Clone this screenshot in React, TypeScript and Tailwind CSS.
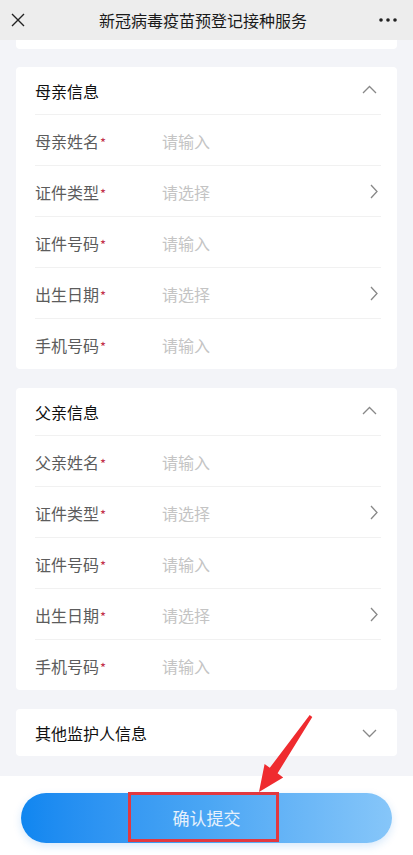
const font = { fontFamily: '"Noto Sans CJK SC", "Noto Sans", sans-serif' };

type Row = { label: string; hint: string; select?: boolean };

const motherRows: Row[] = [
  { label: "母亲姓名", hint: "请输入" },
  { label: "证件类型", hint: "请选择", select: true },
  { label: "证件号码", hint: "请输入" },
  { label: "出生日期", hint: "请选择", select: true },
  { label: "手机号码", hint: "请输入" },
];

const fatherRows: Row[] = [
  { label: "父亲姓名", hint: "请输入" },
  { label: "证件类型", hint: "请选择", select: true },
  { label: "证件号码", hint: "请输入" },
  { label: "出生日期", hint: "请选择", select: true },
  { label: "手机号码", hint: "请输入" },
];

const Chevron = ({ dir }: { dir: "up" | "down" | "right" }) => {
  if (dir === "right")
    return (
      <svg width="8" height="15" viewBox="0 0 8 15" fill="none">
        <path d="M1 1l6 6.5-6 6.5" stroke="#888" strokeWidth="1.3" />
      </svg>
    );
  return (
    <svg width="15" height="9" viewBox="0 0 15 9" fill="none">
      <path
        d={dir === "up" ? "M1 8l6.5-6.5L14 8" : "M1 1l6.5 6.5L14 1"}
        stroke="#888"
        strokeWidth="1.3"
      />
    </svg>
  );
};

const Section = ({ title, rows }: { title: string; rows: Row[] }) => (
  <div className="mx-4 bg-white rounded-[4px] pl-[19px] pr-4">
    <div className="h-[48px] flex items-center justify-between border-b border-[#f1f1f1]">
      <span className="text-[16px] text-[#111]">{title}</span>
      <span className="mr-[4px] mb-[2px]">
        <Chevron dir="up" />
      </span>
    </div>
    {rows.map((r, i) => (
      <div
        key={i}
        className={
          "flex items-center " +
          (i < rows.length - 1 ? "border-b border-[#f1f1f1] h-[51px]" : "h-[50px]")
        }
      >
        <span className="w-[127px] text-[16px] text-[#5c5c5c] pt-[1px]">
          {r.label}
          <span className="text-[#c2304a] text-[13px] ml-[1px]">*</span>
        </span>
        <span className="flex-1 text-[16px] text-[#c4c4c4] pt-[1px]">{r.hint}</span>
        {r.select && (
          <span className="mr-[3px]">
            <Chevron dir="right" />
          </span>
        )}
      </div>
    ))}
  </div>
);

export default function App() {
  return (
    <div className="w-[413px] h-[855px] flex flex-col bg-[#f3f4f8] overflow-hidden" style={font}>
      {/* title bar */}
      <div className="h-[40px] shrink-0 bg-[#ededed] flex items-center px-[11px]">
        <svg width="14" height="14" viewBox="0 0 14 14">
          <path d="M1 1l12 12M13 1L1 13" stroke="#222" strokeWidth="1.4" />
        </svg>
        <div className="flex-1 text-center text-[16px] text-[#1a1a1a] pl-[2px]">
          新冠病毒疫苗预登记接种服务
        </div>
        <svg width="18" height="4" viewBox="0 0 18 4" className="mr-[5px]">
          <circle cx="2" cy="2" r="1.8" fill="#222" />
          <circle cx="9" cy="2" r="1.8" fill="#222" />
          <circle cx="16" cy="2" r="1.8" fill="#222" />
        </svg>
      </div>

      <div className="flex-1 flex flex-col">
        <div className="mx-4 h-[9px] bg-white rounded-b-[4px]" />
        <div className="mt-[18px]">
          <Section title="母亲信息" rows={motherRows} />
        </div>
        <div className="mt-[19px]">
          <Section title="父亲信息" rows={fatherRows} />
        </div>
        <div className="mt-[19px] mx-4 h-[47px] bg-white rounded-[4px] pl-[19px] pr-4 flex items-center justify-between">
          <span className="text-[16px] text-[#111]">其他监护人信息</span>
          <span className="mr-[4px] mt-[2px]">
            <Chevron dir="down" />
          </span>
        </div>
      </div>

      {/* footer */}
      <div className="h-[79px] shrink-0 bg-white pt-[17px] px-[21px] relative">
        <button className="w-full h-[50px] rounded-full bg-gradient-to-r from-[#0f86f0] via-[#4aa6f4] to-[#86c6f9] text-[17px] text-[#e6f1fc] shadow-[0_3px_8px_rgba(30,130,230,0.18)]">
          确认提交
        </button>
        <div className="absolute left-[128px] top-[16px] w-[151px] h-[50px] border-[3px] border-[#e2383f]" />
      </div>

      {/* annotation arrow */}
      <svg className="absolute left-0 top-0 pointer-events-none" width="413" height="855">
        <polygon
          points="312.3,716.9 277.6,773.2 283.2,777.4 259,792 264.6,764 269.8,767.8 309.7,715.1"
          fill="#ef2b2f"
        />
      </svg>
    </div>
  );
}
